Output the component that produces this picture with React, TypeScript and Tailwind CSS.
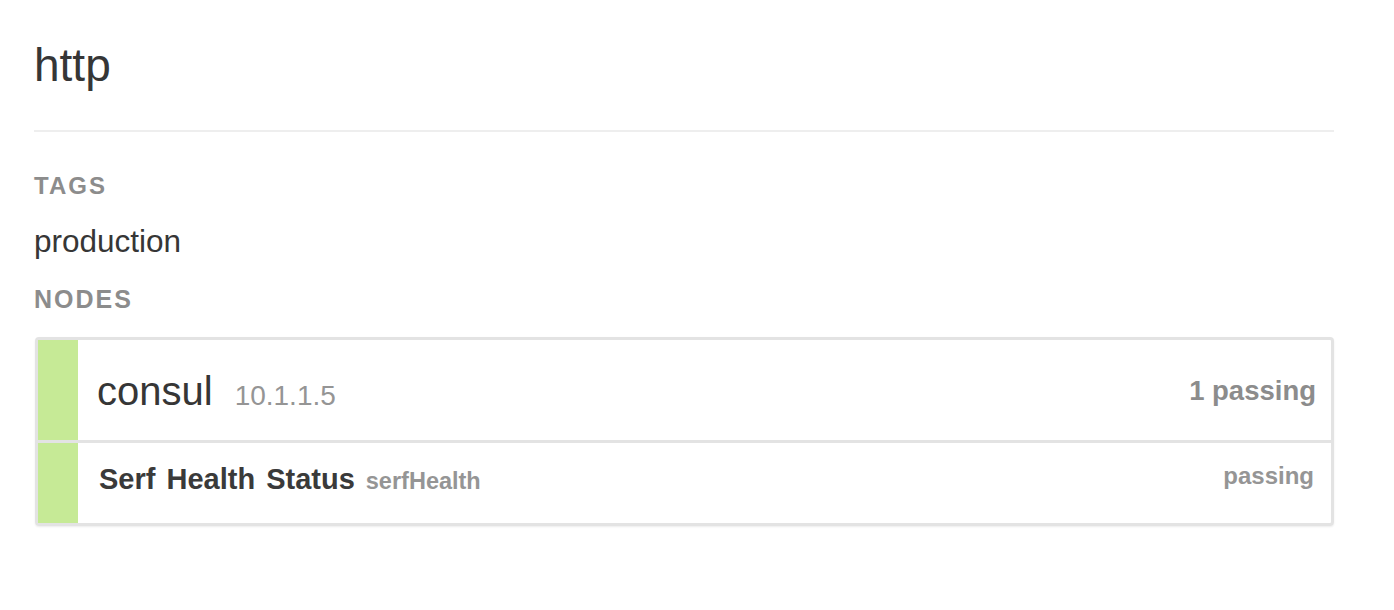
import React from "react";

export default function App() {
  return (
    <div className="min-h-[610px] w-[1394px] bg-white" style={{ fontFamily: '"Liberation Sans", Arial, sans-serif' }}>
      <div className="px-[34px] pt-[38px] w-[1368px]">
        <h1 className="text-[46px] leading-[54px] text-[#363636] font-normal">http</h1>
        <div className="mt-[38px] h-[2px] bg-[#eeeeee]" />
        <div className="mt-[40px] text-[24px] leading-[28px] font-bold tracking-[2px] text-[#8c8c8c]">TAGS</div>
        <div className="mt-[24px] text-[31.5px] leading-[34px] text-[#363636]">production</div>
        <div className="mt-[27px] text-[25px] leading-[28px] font-bold tracking-[2px] text-[#8c8c8c]">NODES</div>
        <div className="mt-[24px] ml-[1px] rounded-[4px] border-[3px] border-[#e3e3e3] shadow-[0_1px_2px_rgba(0,0,0,0.08)]">
          <div className="flex h-[100px]">
            <div className="w-[40px] bg-[#c6ea96]" />
            <div className="flex flex-1 items-center justify-between pl-[19px] pr-[15px] pt-[2px]">
              <div className="flex items-baseline">
                <span className="text-[40px] text-[#363636]">consul</span>
                <span className="ml-[22px] text-[28px] text-[#959595]">10.1.1.5</span>
              </div>
              <span className="text-[27.5px] font-bold text-[#8c8c8c]">1 passing</span>
            </div>
          </div>
          <div className="h-[3px] bg-[#e3e3e3]" />
          <div className="flex h-[80px]">
            <div className="w-[40px] bg-[#c6ea96]" />
            <div className="flex flex-1 items-start justify-between pl-[21px] pr-[17px] pt-[15px]">
              <div className="flex items-baseline">
                <span className="text-[29px] font-bold text-[#3a3a3a] [word-spacing:3px]">Serf Health Status</span>
                <span className="ml-[11px] text-[23.5px] font-bold text-[#959595]">serfHealth</span>
              </div>
              <span className="text-[24px] font-bold text-[#959595]">passing</span>
            </div>
          </div>
        </div>
      </div>
    </div>
  );
}
